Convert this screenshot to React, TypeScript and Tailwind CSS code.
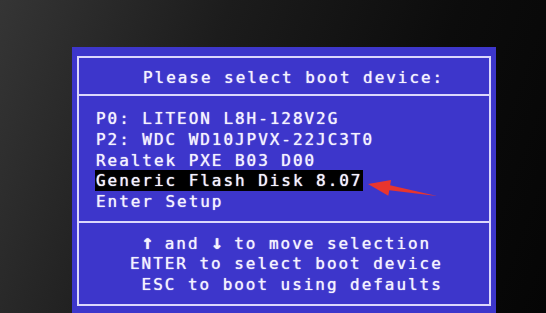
const mono = { fontFamily: '"DejaVu Sans Mono", "Liberation Mono", monospace' };

const devices = [
  "P0: LITEON L8H-128V2G",
  "P2: WDC WD10JPVX-22JC3T0",
  "Realtek PXE B03 D00",
];

const Arrow = () => (
  <svg className="absolute left-[290px] top-[125px]" width={80} height={30} viewBox="0 0 80 30">
    <polygon
      points="6,12 29.1,7.9 28.1,13.3 75,24 27.3,18.3 26.3,23.7"
      fill="#e8352e"
    />
  </svg>
);

const Key = ({ ch }: { ch: string }) => (
  <span className="inline-block w-[11.6px] text-center text-[20px] leading-[0] font-bold tracking-normal">{ch}</span>
);

export default function App() {
  return (
    <div className="w-[546px] h-[313px] overflow-hidden bg-[linear-gradient(110deg,#353535_0%,#1c1c1c_35%,#0c0c0c_70%,#050505_100%)]">
      <div
        className="relative ml-[72px] mt-[47px] w-[424px] h-[266px] bg-[#3d36cb] pt-[9px] px-[5px] pb-[7px] text-[16px] tracking-[1.95px] text-[#f4f2ff] [text-shadow:0_0_1px_#f4f2ff]"
        style={mono}
      >
        <div className="h-full flex flex-col border-2 border-[#dcd8fb]">
          <div className="h-[38px] flex items-center pt-[4px] pl-[64px] border-b-2 border-[#dcd8fb]">
            Please select boot device:
          </div>
          <div className="pl-[17px] pt-[13px] pb-[8px] leading-[20.75px] border-b-2 border-[#dcd8fb]">
            {devices.map((d) => (
              <div key={d}>{d}</div>
            ))}
            <div>
              <span className="bg-black px-[1px] -ml-[1px] py-[1px]">Generic Flash Disk 8.07</span>
            </div>
            <div>Enter Setup</div>
          </div>
          <div className="pl-[51px] pt-[11px] leading-[20.5px] whitespace-pre">
            <div> <Key ch="↑" /> and <Key ch="↓" /> to move selection</div>
            <div>ENTER to select boot device</div>
            <div> ESC to boot using defaults</div>
          </div>
        </div>
        <Arrow />
      </div>
    </div>
  );
}
